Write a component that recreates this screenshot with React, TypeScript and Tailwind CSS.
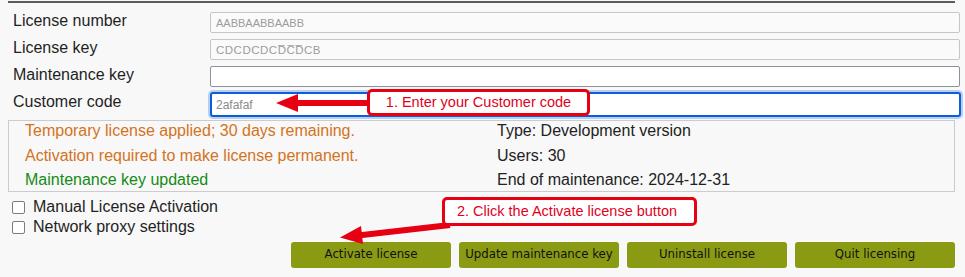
import React from 'react'

const rows = [
  { label: 'License number', kind: 'disabled', value: 'AABBAABBAABB', cls: 'text-[11px]' },
  { label: 'License key', kind: 'disabled', value: 'CDCDCDCD\u0305C\u0305D\u0305CB', cls: 'text-[11.5px] tracking-[0.5px]' },
  { label: 'Maintenance key', kind: 'plain', value: '', cls: 'text-[12px]' },
  { label: 'Customer code', kind: 'focused', value: '2afafaf', cls: 'text-[12px]' },
]

const buttons = ['Activate license', 'Update maintenance key', 'Uninstall license', 'Quit licensing']

function Field({ kind, value, cls }: { kind: string; value: string; cls: string }) {
  if (kind === 'focused') {
    return (
      <input
        readOnly
        defaultValue={value}
        className={`h-[25px] w-[751px] rounded-[3px] border-2 border-[#0a5fd8] bg-white pl-[4px] text-[#8a8a8a] outline-none shadow-[0_0_0_2px_#b9cff2] ${cls}`}
      />
    )
  }
  if (kind === 'plain') {
    return (
      <input
        readOnly
        defaultValue={value}
        className={`mt-[1px] h-[21px] w-[750px] rounded-[2px] border border-[#8f8f9d] bg-white pl-[5px] outline-none ${cls}`}
      />
    )
  }
  return (
    <input
      readOnly
      defaultValue={value}
      className={`mt-[1px] h-[21px] w-[750px] rounded-[2px] border border-[#c6c6c6] bg-[#fafafa] pl-[5px] text-[#9c9c9c] outline-none ${cls}`}
    />
  )
}

export default function App() {
  return (
    <div className="relative h-[277px] w-[965px] overflow-hidden bg-[#f8f8f8] font-['Liberation_Sans',Arial,sans-serif] text-[#1f1f1f]">
      {/* top rule */}
      <div className="pl-[8px] pt-[1px]">
        <div className="h-[2px] w-[947px] bg-[#5c5c5c]" />
      </div>

      {/* key fields */}
      <div className="mt-[8px] flex flex-col">
        {rows.map(r => (
          <div key={r.label} className="flex h-[27px] items-start">
            <div className="w-[210px] pl-[13px] pt-[1px] text-[16px] leading-[17px]">{r.label}</div>
            <Field kind={r.kind} value={r.value} cls={r.cls} />
          </div>
        ))}
      </div>

      {/* status panel */}
      <div className="ml-[8px] mt-[1px] h-[72px] w-[947px] border border-[#cccccc]">
        <div className="-mt-[2px] grid grid-cols-[472px_1fr] pl-[16px] text-[16px] leading-[24.5px]">
          <div>
            <div className="text-[#d3731d]">Temporary license applied; 30 days remaining.</div>
            <div className="text-[#d3731d]">Activation required to make license permanent.</div>
            <div className="text-[#168a16]">Maintenance key updated</div>
          </div>
          <div className="text-[#222]">
            <div>Type: Development version</div>
            <div>Users: 30</div>
            <div>End of maintenance: 2024-12-31</div>
          </div>
        </div>
      </div>

      {/* options */}
      <div className="mt-[5px] flex flex-col text-[16px] leading-[20px]">
        {['Manual License Activation', 'Network proxy settings'].map(t => (
          <div key={t} className="flex h-[20px] items-center gap-[8px] pl-[12px]">
            <span className="h-[13px] w-[13px] rounded-[2px] border-[1.5px] border-[#7b7b86] bg-white" />
            <span>{t}</span>
          </div>
        ))}
      </div>

      {/* actions */}
      <div className="mt-[5px] flex justify-end gap-[8px] pr-[10px]">
        {buttons.map(b => (
          <button
            key={b}
            className="flex h-[26px] w-[160px] items-center justify-center whitespace-nowrap rounded-[3px] bg-[#8a9b13] font-['DejaVu_Sans',Tahoma,sans-serif] text-[11.75px] text-[#111]"
          >
            {b}
          </button>
        ))}
      </div>

      {/* annotation arrows */}
      <svg className="pointer-events-none absolute left-0 top-0" width={965} height={277}>
        <line x1={370} y1={103} x2={294} y2={103} stroke="#e60012" strokeWidth={6} />
        <polygon points="276,103 298,94 298,112" fill="#e60012" />
        <line x1={450} y1={225} x2={360} y2={235.3} stroke="#e60012" strokeWidth={6} />
        <polygon points="340,237.5 363,244 361,226" fill="#e60012" />
      </svg>

      {/* annotation callouts */}
      <div className="absolute left-[367px] top-[89px] flex h-[27px] w-[223px] items-center justify-center rounded-[5px] border-[3px] border-[#e60012] bg-white text-[14.5px] text-[#e3001c]">
        1. Enter your Customer code
      </div>
      <div className="absolute left-[442px] top-[197px] flex h-[29px] w-[255px] items-center rounded-[5px] border-[3px] border-[#e60012] bg-white pl-[12px] text-[14.5px] text-[#e3001c]">
        2. Click the Activate license button
      </div>
    </div>
  )
}
